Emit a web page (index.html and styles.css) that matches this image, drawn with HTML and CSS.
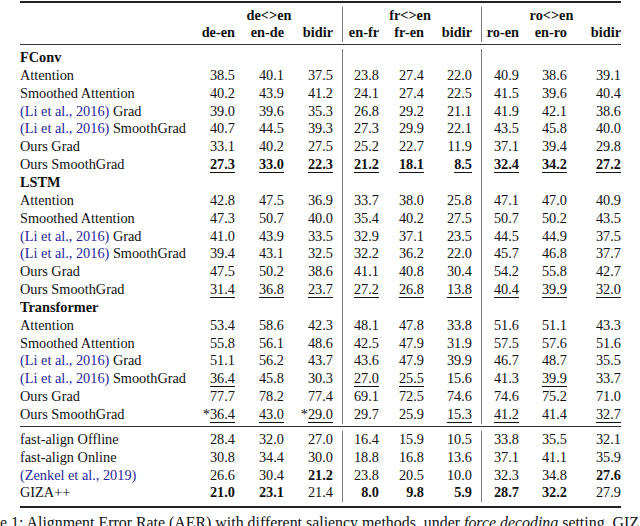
FILE: index.html
```html
<!DOCTYPE html>
<html>
<head>
<meta charset="utf-8">
<link rel="stylesheet" href="styles.css">
</head>
<body>
<div class="page">
  <div class="tbl">
    <div class="toprule"></div>
    <div class="row head">
      <div class="lbl"></div>
      <div class="grp g1">de&lt;&gt;en</div>
      <div class="grp g2 s">fr&lt;&gt;en</div>
      <div class="grp g3 s">ro&lt;&gt;en</div>
    </div>
    <div class="row head">
      <div class="lbl"></div>
      <div>de-en</div><div>en-de</div><div class="e">bidir</div>
      <div class="s">en-fr</div><div>fr-en</div><div class="e">bidir</div>
      <div class="s">ro-en</div><div>en-ro</div><div>bidir</div>
    </div>
    <div class="midrule"></div>

    <div class="row"><div class="lbl sec">FConv</div><div></div><div></div><div class="e"></div><div class="s"></div><div></div><div class="e"></div><div class="s"></div><div></div><div></div></div>
    <div class="row"><div class="lbl">Attention</div><div>38.5</div><div>40.1</div><div class="e">37.5</div><div class="s">23.8</div><div>27.4</div><div class="e">22.0</div><div class="s">40.9</div><div>38.6</div><div>39.1</div></div>
    <div class="row"><div class="lbl">Smoothed Attention</div><div>40.2</div><div>43.9</div><div class="e">41.2</div><div class="s">24.1</div><div>27.4</div><div class="e">22.5</div><div class="s">41.5</div><div>39.6</div><div>40.4</div></div>
    <div class="row"><div class="lbl"><span class="cite">(Li et al., 2016)</span> Grad</div><div>39.0</div><div>39.6</div><div class="e">35.3</div><div class="s">26.8</div><div>29.2</div><div class="e">21.1</div><div class="s">41.9</div><div>42.1</div><div>38.6</div></div>
    <div class="row"><div class="lbl"><span class="cite">(Li et al., 2016)</span> SmoothGrad</div><div>40.7</div><div>44.5</div><div class="e">39.3</div><div class="s">27.3</div><div>29.9</div><div class="e">22.1</div><div class="s">43.5</div><div>45.8</div><div>40.0</div></div>
    <div class="row"><div class="lbl">Ours Grad</div><div>33.1</div><div>40.2</div><div class="e">27.5</div><div class="s">25.2</div><div>22.7</div><div class="e">11.9</div><div class="s">37.1</div><div>39.4</div><div>29.8</div></div>
    <div class="row"><div class="lbl">Ours SmoothGrad</div><div><b><u>27.3</u></b></div><div><b><u>33.0</u></b></div><div class="e"><b><u>22.3</u></b></div><div class="s"><b><u>21.2</u></b></div><div><b><u>18.1</u></b></div><div class="e"><b><u>8.5</u></b></div><div class="s"><b><u>32.4</u></b></div><div><b><u>34.2</u></b></div><div><b><u>27.2</u></b></div></div>

    <div class="row"><div class="lbl sec">LSTM</div><div></div><div></div><div class="e"></div><div class="s"></div><div></div><div class="e"></div><div class="s"></div><div></div><div></div></div>
    <div class="row"><div class="lbl">Attention</div><div>42.8</div><div>47.5</div><div class="e">36.9</div><div class="s">33.7</div><div>38.0</div><div class="e">25.8</div><div class="s">47.1</div><div>47.0</div><div>40.9</div></div>
    <div class="row"><div class="lbl">Smoothed Attention</div><div>47.3</div><div>50.7</div><div class="e">40.0</div><div class="s">35.4</div><div>40.2</div><div class="e">27.5</div><div class="s">50.7</div><div>50.2</div><div>43.5</div></div>
    <div class="row"><div class="lbl"><span class="cite">(Li et al., 2016)</span> Grad</div><div>41.0</div><div>43.9</div><div class="e">33.5</div><div class="s">32.9</div><div>37.1</div><div class="e">23.5</div><div class="s">44.5</div><div>44.9</div><div>37.5</div></div>
    <div class="row"><div class="lbl"><span class="cite">(Li et al., 2016)</span> SmoothGrad</div><div>39.4</div><div>43.1</div><div class="e">32.5</div><div class="s">32.2</div><div>36.2</div><div class="e">22.0</div><div class="s">45.7</div><div>46.8</div><div>37.7</div></div>
    <div class="row"><div class="lbl">Ours Grad</div><div>47.5</div><div>50.2</div><div class="e">38.6</div><div class="s">41.1</div><div>40.8</div><div class="e">30.4</div><div class="s">54.2</div><div>55.8</div><div>42.7</div></div>
    <div class="row"><div class="lbl">Ours SmoothGrad</div><div><u>31.4</u></div><div><u>36.8</u></div><div class="e"><u>23.7</u></div><div class="s"><u>27.2</u></div><div><u>26.8</u></div><div class="e"><u>13.8</u></div><div class="s"><u>40.4</u></div><div><u>39.9</u></div><div><u>32.0</u></div></div>

    <div class="row"><div class="lbl sec">Transformer</div><div></div><div></div><div class="e"></div><div class="s"></div><div></div><div class="e"></div><div class="s"></div><div></div><div></div></div>
    <div class="row"><div class="lbl">Attention</div><div>53.4</div><div>58.6</div><div class="e">42.3</div><div class="s">48.1</div><div>47.8</div><div class="e">33.8</div><div class="s">51.6</div><div>51.1</div><div>43.3</div></div>
    <div class="row"><div class="lbl">Smoothed Attention</div><div>55.8</div><div>56.1</div><div class="e">48.6</div><div class="s">42.5</div><div>47.9</div><div class="e">31.9</div><div class="s">57.5</div><div>57.6</div><div>51.6</div></div>
    <div class="row"><div class="lbl"><span class="cite">(Li et al., 2016)</span> Grad</div><div>51.1</div><div>56.2</div><div class="e">43.7</div><div class="s">43.6</div><div>47.9</div><div class="e">39.9</div><div class="s">46.7</div><div>48.7</div><div>35.5</div></div>
    <div class="row"><div class="lbl"><span class="cite">(Li et al., 2016)</span> SmoothGrad</div><div><u>36.4</u></div><div>45.8</div><div class="e">30.3</div><div class="s"><u>27.0</u></div><div><u>25.5</u></div><div class="e">15.6</div><div class="s">41.3</div><div><u>39.9</u></div><div>33.7</div></div>
    <div class="row"><div class="lbl">Ours Grad</div><div>77.7</div><div>78.2</div><div class="e">77.4</div><div class="s">69.1</div><div>72.5</div><div class="e">74.6</div><div class="s">74.6</div><div>75.2</div><div>71.0</div></div>
    <div class="row"><div class="lbl">Ours SmoothGrad</div><div>*<u>36.4</u></div><div><u>43.0</u></div><div class="e">*<u>29.0</u></div><div class="s">29.7</div><div>25.9</div><div class="e"><u>15.3</u></div><div class="s"><u>41.2</u></div><div>41.4</div><div><u>32.7</u></div></div>

    <div class="midrule low"></div>

    <div class="row"><div class="lbl">fast-align Offline</div><div>28.4</div><div>32.0</div><div class="e">27.0</div><div class="s">16.4</div><div>15.9</div><div class="e">10.5</div><div class="s">33.8</div><div>35.5</div><div>32.1</div></div>
    <div class="row"><div class="lbl">fast-align Online</div><div>30.8</div><div>34.4</div><div class="e">30.0</div><div class="s">18.8</div><div>16.8</div><div class="e">13.6</div><div class="s">37.1</div><div>41.1</div><div>35.9</div></div>
    <div class="row"><div class="lbl"><span class="cite">(Zenkel et al., 2019)</span></div><div>26.6</div><div>30.4</div><div class="e"><b>21.2</b></div><div class="s">23.8</div><div>20.5</div><div class="e">10.0</div><div class="s">32.3</div><div>34.8</div><div><b>27.6</b></div></div>
    <div class="row"><div class="lbl">GIZA++</div><div><b>21.0</b></div><div><b>23.1</b></div><div class="e">21.4</div><div class="s"><b>8.0</b></div><div><b>9.8</b></div><div class="e"><b>5.9</b></div><div class="s"><b>28.7</b></div><div><b>32.2</b></div><div>27.9</div></div>

    <div class="bottomrule"></div>
  </div>
  <p class="caption">Table 1: Alignment Error Rate (AER) with different saliency methods, under <i>force decoding</i> setting. GIZA++ achieves the lowest error rates.</p>
</div>
</body>
</html>
```

FILE: styles.css
```css
html, body {
  margin: 0;
  padding: 0;
  background: #ffffff;
}

body {
  width: 640px;
  height: 526px;
  overflow: hidden;
  font-family: "Liberation Serif", "Times New Roman", serif;
  color: #111111;
}

.page {
  padding-left: 20px;
}

.tbl {
  width: 601px;
  display: flex;
  flex-direction: column;
  font-size: 14.3px;
}

.toprule {
  height: 2px;
  background: #222222;
  margin-top: 1px;
  margin-bottom: 3.6px;
}

.midrule {
  height: 1px;
  background: #333333;
  margin-top: 2.2px;
  margin-bottom: 3.6px;
}

.midrule.low {
  margin-top: 2.55px;
}

.bottomrule {
  height: 2px;
  background: #222222;
  margin-top: 3.5px;
}

.row {
  display: grid;
  grid-template-columns: 180px 35px 49px 58px 37px 45px 57px 38px 48px 54px;
  height: 17.85px;
  line-height: 17.85px;
  white-space: nowrap;
}

.row > div {
  text-align: right;
}

.row > .lbl {
  text-align: left;
}

.row > .e {
  padding-right: 9px;
}

.row > .s {
  border-left: 1px solid #7a7a7a;
}

.head {
  font-weight: bold;
}

.row > .grp {
  text-align: center;
}

.g1 {
  grid-column: 2 / 5;
  padding-right: 4px;
}

.g2 {
  grid-column: 5 / 8;
  padding-right: 4px;
}

.g3 {
  grid-column: 8 / 11;
}

.sec {
  font-weight: bold;
}

.cite {
  color: #26269a;
}

u {
  text-decoration-thickness: 1px;
  text-underline-offset: 3px;
}

.caption {
  margin: 6px 0 0 -48px;
  font-size: 15.9px;
  line-height: 18px;
  white-space: nowrap;
}
```
